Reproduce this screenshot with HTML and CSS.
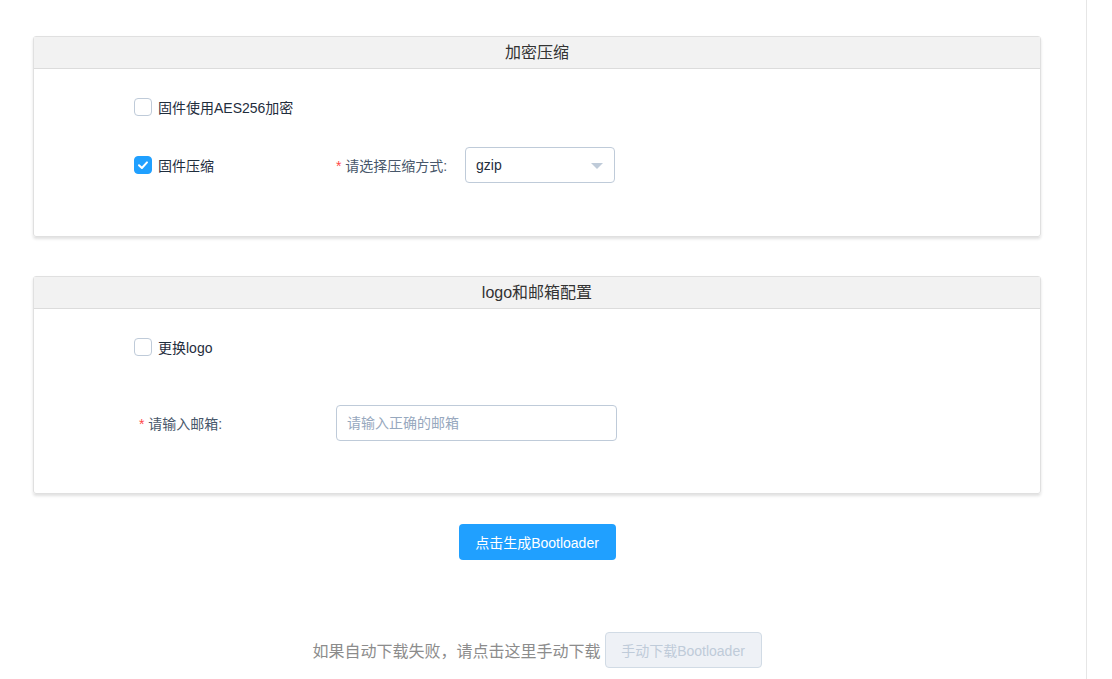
FILE: index.html
```html
<!DOCTYPE html>
<html lang="zh-CN">
<head>
  <meta charset="UTF-8" />
  <title>Bootloader 配置</title>
  <link rel="stylesheet" href="styles.css">
</head>
<body>

  <div class="page">
    <div class="content">

      <div class="card">
        <div class="card-header">加密压缩</div>
        <div class="card-body body-tall">
          <div class="row">
            <label class="check">
              <span class="box"></span>
              <span>固件使用AES256加密</span>
            </label>
          </div>
          <div class="row">
            <label class="check check-col">
              <span class="box checked">
                <svg viewBox="0 0 16 16" width="16" height="16"><path d="M4 8.2 L6.9 11 L12 5.4" fill="none" stroke="#fff" stroke-width="2" stroke-linecap="round" stroke-linejoin="round"/></svg>
              </span>
              <span>固件压缩</span>
            </label>
            <span class="form-label compress-label"><i class="star">*</i> 请选择压缩方式:</span>
            <div class="select">
              <span>gzip</span>
              <span class="arrow"></span>
            </div>
          </div>
        </div>
      </div>

      <div class="card">
        <div class="card-header">logo和邮箱配置</div>
        <div class="card-body">
          <div class="row">
            <label class="check">
              <span class="box"></span>
              <span>更换logo</span>
            </label>
          </div>
          <div class="row row-mail">
            <span class="form-label mail-label"><i class="star">*</i> 请输入邮箱:</span>
            <input class="input" type="text" placeholder="请输入正确的邮箱">
          </div>
        </div>
      </div>

      <div class="actions">
        <button class="btn-primary">点击生成Bootloader</button>
      </div>

      <div class="manual">
        <span>如果自动下载失败，请点击这里手动下载</span>
        <button class="btn-disabled" disabled>手动下载Bootloader</button>
      </div>

    </div>
  </div>

</body>
</html>
```

FILE: styles.css
```css
body {
  margin: 0;
  font-family: "Liberation Sans", "Noto Sans CJK SC", sans-serif;
  font-size: 14px;
  color: #1f2d3d;
  background: #fff;
}

.page {
  width: 1086px;
  height: 679px;
  border-right: 1px solid #e6e6e6;
  overflow: hidden;
}

.content {
  width: 1008px;
  padding: 36px 0 0 33px;
}

.card {
  border: 1px solid #e0e0e0;
  border-radius: 3px;
  box-shadow: 0 2px 3px rgba(0, 0, 0, 0.12);
  margin-bottom: 39px;
  box-sizing: border-box;
}

.card + .card + .actions {
  margin-top: -9px;
}

.card-header {
  height: 31px;
  line-height: 31px;
  background: #f2f2f2;
  border-bottom: 1px solid #dcdcdc;
  text-align: center;
  font-size: 16px;
  color: #333;
}

.card-body {
  padding: 20px 0 52px 100px;
}

.card-body.body-tall {
  padding-bottom: 53px;
}

.row {
  display: flex;
  align-items: center;
  height: 36px;
}

.row + .row {
  margin-top: 22px;
}

.row.row-mail {
  margin-top: 40px;
}

.check {
  display: flex;
  align-items: center;
  gap: 6px;
  color: #1f2d3d;
}

.check-col {
  width: 202px;
}

.box {
  width: 16px;
  height: 16px;
  border: 1px solid #bfcbd9;
  border-radius: 4px;
  background: #fff;
  display: flex;
  align-items: center;
  justify-content: center;
}

.box.checked {
  background: #20a0ff;
  border-color: #20a0ff;
}

.form-label {
  color: #48576a;
}

.star {
  font-style: normal;
  color: #ff4949;
}

.compress-label {
  width: 129px;
}

.mail-label {
  width: 197px;
  padding-left: 5px;
}

.select {
  width: 150px;
  height: 36px;
  box-sizing: border-box;
  border: 1px solid #bfcbd9;
  border-radius: 4px;
  display: flex;
  align-items: center;
  justify-content: space-between;
  padding: 0 11px 0 10px;
  color: #1f2d3d;
}

.arrow {
  width: 0;
  height: 0;
  border-left: 6px solid transparent;
  border-right: 6px solid transparent;
  border-top: 6px solid #bfcbd9;
  margin-top: 1px;
}

.input {
  width: 281px;
  height: 36px;
  box-sizing: border-box;
  border: 1px solid #bfcbd9;
  border-radius: 4px;
  padding: 0 10px;
  font-family: inherit;
  font-size: 14px;
  color: #1f2d3d;
  outline: none;
}

.input::placeholder {
  color: #97a8be;
}

.actions {
  text-align: center;
}

.btn-primary {
  width: 157px;
  height: 36px;
  border: none;
  border-radius: 4px;
  background: #20a0ff;
  color: #fff;
  font-family: inherit;
  font-size: 14px;
  cursor: pointer;
}

.manual {
  margin-top: 72px;
  display: flex;
  justify-content: center;
  align-items: center;
  gap: 4px;
  font-size: 16px;
  color: #8c8c8c;
}

.btn-disabled {
  width: 157px;
  height: 36px;
  border: 1px solid #d1dbe5;
  border-radius: 4px;
  background: #eef1f6;
  color: #bfcbd9;
  font-family: inherit;
  font-size: 14px;
}
```
